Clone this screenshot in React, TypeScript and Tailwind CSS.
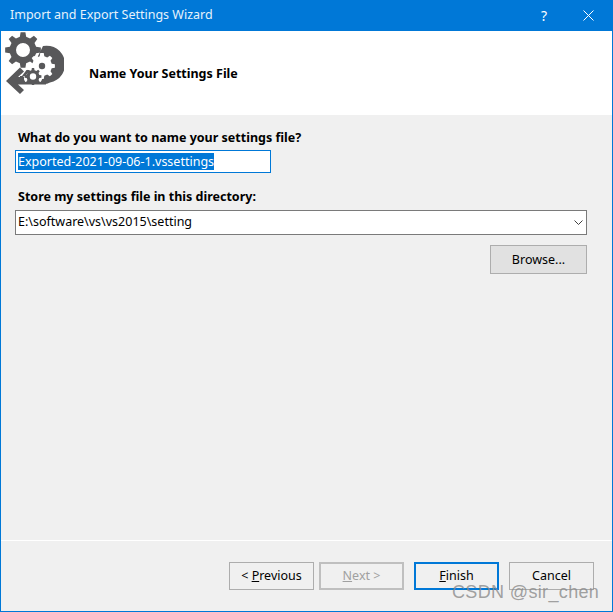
function gearPath(cx: number, cy: number, outer: number, inner: number, hole: number, teeth: number) {
  const pts: string[] = []
  const step = (Math.PI * 2) / teeth
  for (let i = 0; i < teeth; i++) {
    const a = i * step - Math.PI / 2
    const corners: [number, number][] = [
      [a - step * 0.3, inner],
      [a - step * 0.17, outer],
      [a + step * 0.17, outer],
      [a + step * 0.3, inner],
    ]
    for (const [t, r] of corners) {
      pts.push(`${(cx + Math.cos(t) * r).toFixed(2)} ${(cy + Math.sin(t) * r).toFixed(2)}`)
    }
  }
  const ring = hole > 0 ? `M${cx - hole} ${cy}a${hole} ${hole} 0 1 0 ${hole * 2} 0a${hole} ${hole} 0 1 0 ${-hole * 2} 0Z` : ''
  return `M${pts.join('L')}Z${ring}`
}

function WizardIcon() {
  return (
    <svg width="60" height="66" viewBox="4 30 60 66" className="shrink-0">
      <path fill="#58585a" d="M43 45A18.500 18.500 0 0 1 50 81.500Q47 83 44 83H20V75H36L38 55Z" />
      <path fillRule="evenodd" fill="#58585a" d={gearPath(23, 49, 18, 13.5, 7, 8)} />
      <path fill="#ffffff" d={gearPath(42, 65, 13, 10, 0, 8)} />
      <circle cx="42" cy="65" r="3.200" fill="#58585a" />
      <circle cx="33" cy="75.500" r="9.500" fill="#ffffff" />
      <path fill="#58585a" d="M6 80L20 66.500L24 70.500L18 76H24V83.500H18L24 89L20 93Z" />
      <path fill="#58585a" d="M22 75L26.500 69H30L25.500 75Z" />
      <path fill="#58585a" d="M24 81H46V83.500H24Z" />
      <path fillRule="evenodd" fill="#58585a" d={gearPath(33, 75.500, 8.500, 6.500, 3.200, 8)} />
    </svg>
  )
}

function FooterButton({ children, disabled, primary }: { children: React.ReactNode; disabled?: boolean; primary?: boolean }) {
  let cls = 'border-[#adadad] border text-black'
  if (primary) cls = 'border-[#0078d7] border-2 text-black'
  if (disabled) cls = 'border-[#bfbfbf] border-2 text-[#a0a0a0]'
  return (
    <button className={`w-[85px] h-[28px] bg-[#f0f0f0] flex items-center justify-center ${cls}`}>
      <span>{children}</span>
    </button>
  )
}

export default function App() {
  return (
    <div className="relative w-[613px] h-[612px] flex flex-col bg-[#f0f0f0] border-x border-b border-[#0078d7] text-[12.5px] text-black font-['Noto_Sans','Open_Sans',sans-serif] overflow-hidden">
      <div className="h-[31px] shrink-0 -mx-px bg-[#0078d7] text-[#e6f2fb] flex items-center pl-[10px] pr-[19px]">
        <span className="flex-1">Import and Export Settings Wizard</span>
        <span className="text-[14px] mr-[36px] text-white">?</span>
        <svg width="11" height="11" viewBox="0 0 11 11" stroke="#ffffff" strokeWidth="1" fill="none">
          <path d="M0.500 0.500l10 10M10.500 0.500l-10 10" />
        </svg>
      </div>

      <div className="h-[84px] shrink-0 bg-white flex items-start pl-[3px] overflow-hidden">
        <WizardIcon />
        <div className="ml-[25px] mt-[34px] font-bold">Name Your Settings File</div>
      </div>

      <div className="flex-1 flex flex-col pl-[14px] pr-[25px]">
        <div className="mt-[14px] pl-[3px] font-bold leading-[17px]">What do you want to name your settings file?</div>
        <div className="mt-[4px] w-[256px] h-[23px] bg-white border border-[#0078d7] flex items-center pl-[2px] leading-[17px]">
          <span className="bg-[#0078d7] text-white">Exported-2021-09-06-1.vssettings</span>
        </div>
        <div className="mt-[15px] pl-[3px] font-bold leading-[17px]">Store my settings file in this directory:</div>
        <div className="mt-[5px] h-[25px] bg-white border border-[#7a7a7a] flex items-center pl-[2px] pr-[3px]">
          <span className="flex-1">E:\software\vs\vs2015\setting</span>
          <svg width="9" height="5" viewBox="0 0 9 5" fill="none" stroke="#404040" strokeWidth="1">
            <path d="M0.500 0.500l4 4 4-4" />
          </svg>
        </div>
        <div className="mt-[10px] flex justify-end">
          <button className="w-[97px] h-[29px] pt-px bg-[#e1e1e1] border border-[#adadad]">Browse...</button>
        </div>
      </div>

      <div className="h-[71px] shrink-0 border-t border-white flex items-start justify-end pt-[21px] pr-[18px]">
        <FooterButton>&lt; <u>P</u>revious</FooterButton>
        <div className="ml-[5px]"><FooterButton disabled><u>N</u>ext &gt;</FooterButton></div>
        <div className="ml-[10px]"><FooterButton primary><u>F</u>inish</FooterButton></div>
        <div className="ml-[10px]"><FooterButton>Cancel</FooterButton></div>
      </div>

      <div className="absolute left-[451px] top-[580px] text-[18px] leading-[24px] tracking-[0.35px] text-[#8a8a8a]/80 font-['Liberation_Sans',sans-serif] whitespace-nowrap">
        CSDN @sir_chen
      </div>
    </div>
  )
}
